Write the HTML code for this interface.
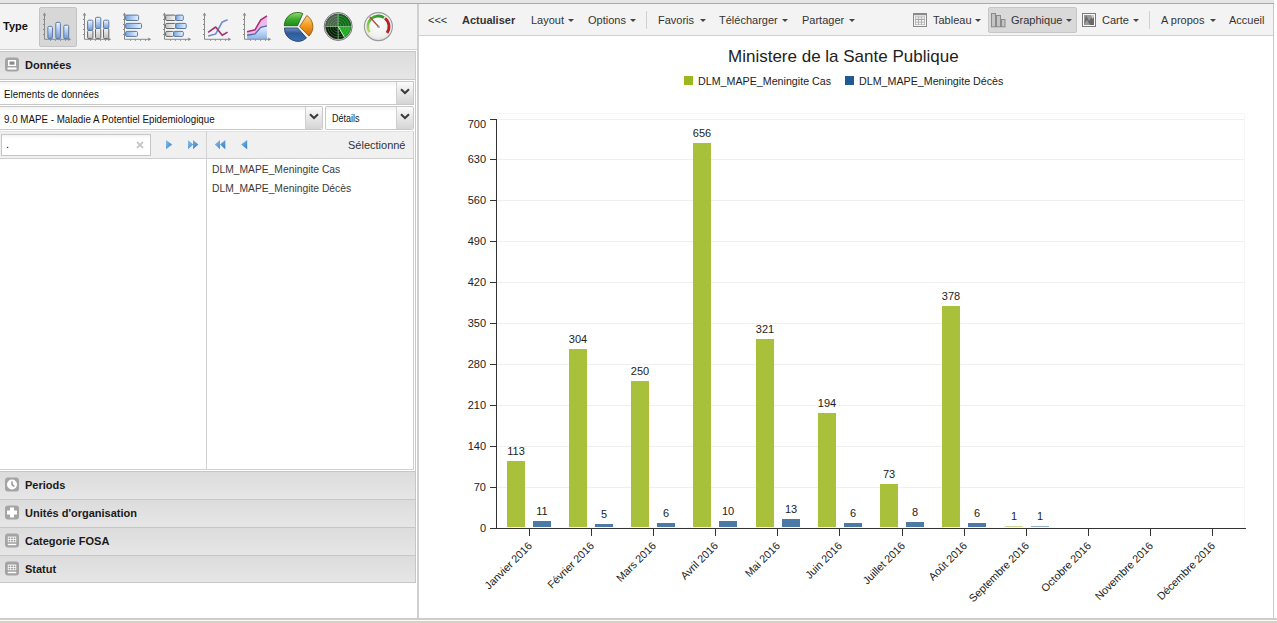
<!DOCTYPE html>
<html><head><meta charset="utf-8">
<style>
*{box-sizing:border-box}
html,body{margin:0;padding:0;width:1277px;height:623px;overflow:hidden;background:#fff;font-family:"Liberation Sans",sans-serif;color:#333}
.a{position:absolute}
.t{position:absolute;white-space:nowrap;line-height:1}
.hdr{position:absolute;left:0;width:416px;height:29px;background:linear-gradient(#dcdcdc,#e6e6e6);border:1px solid #c6c6c6;border-left:none}
.hdr .lbl{position:absolute;left:25px;top:7px;font-size:11px;font-weight:bold;color:#1a1a1a}
.hico{position:absolute;left:5px;top:5px}
.combo{position:absolute;background:linear-gradient(#f3f3f3,#fff 5px);border-top:1px solid #c8c8c8;border-bottom:1px solid #c8c8c8;border-right:1px solid #c8c8c8}
.trig{position:absolute;top:0;right:0;width:17px;height:100%;background:linear-gradient(#fbfbfb,#d4d4d4);border-left:1px solid #d0d0d0}
.tb{position:absolute;top:15px;line-height:1;white-space:nowrap;font-size:11px;color:#333}
.arr{position:absolute;top:19px;width:0;height:0;border-left:3px solid transparent;border-right:3px solid transparent;border-top:3px solid #444}
</style></head><body>
<!-- top strip -->
<div class="a" style="left:0;top:0;width:1274px;height:4px;background:#e6e6e6;border-bottom:1px solid #a9a9a9"></div>
<!-- bottom band -->
<div class="a" style="left:0;top:618px;width:1277px;height:2px;background:#cfcdc8"></div>
<div class="a" style="left:0;top:620px;width:1277px;height:1px;background:#fafaf7"></div>
<div class="a" style="left:0;top:621px;width:1277px;height:2px;background:#d4d1cb"></div>

<!-- LEFT PANEL -->
<div class="a" style="left:0;top:4px;width:417px;height:46px;background:#f3f3f3;border-bottom:1px solid #d0d0d0"></div>
<div class="t" style="left:3px;top:21px;font-size:11px;font-weight:bold;color:#111">Type</div>
<div class="a" style="left:39px;top:7px;width:38px;height:40px;background:#d7d7d7;border:1px solid #c3c3c3;border-radius:2px"></div>

<!--ICONS-START-->
<svg class="a" style="left:0;top:0" width="420" height="50">
<defs>
<linearGradient id="gb" x1="0" y1="0" x2="0" y2="1"><stop offset="0" stop-color="#f2f8ff"/><stop offset="1" stop-color="#6f9bd6"/></linearGradient>
<linearGradient id="gbh" x1="0" y1="0" x2="1" y2="0"><stop offset="0" stop-color="#7aa6de"/><stop offset="1" stop-color="#eaf4ff"/></linearGradient>
<linearGradient id="gg" x1="0" y1="0" x2="0" y2="1"><stop offset="0" stop-color="#f4f4f4"/><stop offset="1" stop-color="#bdbdbd"/></linearGradient>
<linearGradient id="ggh" x1="0" y1="0" x2="1" y2="0"><stop offset="0" stop-color="#c4c4c4"/><stop offset="1" stop-color="#f6f6f6"/></linearGradient>
<linearGradient id="pgreen" x1="0" y1="0" x2="0" y2="1"><stop offset="0" stop-color="#8fdc6a"/><stop offset="0.55" stop-color="#3aa82c"/><stop offset="1" stop-color="#1f8a1a"/></linearGradient>
<linearGradient id="porange" x1="0" y1="0" x2="0" y2="1"><stop offset="0" stop-color="#fbd38f"/><stop offset="0.5" stop-color="#f39a1c"/><stop offset="1" stop-color="#c86a0a"/></linearGradient>
<linearGradient id="pblue" x1="0" y1="0" x2="0" y2="1"><stop offset="0" stop-color="#6f8fc0"/><stop offset="0.4" stop-color="#2f5a9a"/><stop offset="1" stop-color="#3a70b0"/></linearGradient>
<radialGradient id="radar" cx="0.6" cy="0.45" r="0.6"><stop offset="0" stop-color="#2c7a2c"/><stop offset="0.7" stop-color="#123a14"/><stop offset="1" stop-color="#0a1f0b"/></radialGradient>
<radialGradient id="gauge" cx="0.5" cy="0.4" r="0.6"><stop offset="0" stop-color="#ffffff"/><stop offset="0.8" stop-color="#efefef"/><stop offset="1" stop-color="#d8d8d8"/></radialGradient>
<linearGradient id="areaB" x1="0" y1="0" x2="0" y2="1"><stop offset="0" stop-color="#e8f2ff"/><stop offset="1" stop-color="#8fb4e8"/></linearGradient>
<linearGradient id="ggreen" x1="0" y1="1" x2="0.6" y2="0"><stop offset="0" stop-color="#b8e070"/><stop offset="1" stop-color="#2f9a2a"/></linearGradient>
</defs>
<path d="M44.5 14.1 L44.5 39.3 L69.7 39.3" fill="none" stroke="#8a8a8a" stroke-width="1"/><path d="M42.7 15.6 L44.5 12.6 L46.3 15.6Z" fill="#8a8a8a"/><path d="M68.2 37.5 L71.2 39.3 L68.2 41.099999999999994Z" fill="#8a8a8a"/><line x1="43.0" y1="19.5" x2="44.5" y2="19.5" stroke="#8a8a8a"/><line x1="43.0" y1="24.5" x2="44.5" y2="24.5" stroke="#8a8a8a"/><line x1="43.0" y1="29.5" x2="44.5" y2="29.5" stroke="#8a8a8a"/><line x1="43.0" y1="34.5" x2="44.5" y2="34.5" stroke="#8a8a8a"/><line x1="50.5" y1="39.3" x2="50.5" y2="40.8" stroke="#8a8a8a"/><line x1="55.5" y1="39.3" x2="55.5" y2="40.8" stroke="#8a8a8a"/><line x1="60.5" y1="39.3" x2="60.5" y2="40.8" stroke="#8a8a8a"/><line x1="65.5" y1="39.3" x2="65.5" y2="40.8" stroke="#8a8a8a"/>
<rect x="47.9" y="26.3" width="4.5" height="12.3" rx="1.2" fill="url(#gb)" stroke="#5a79a8" stroke-width="1"/>
<rect x="55.8" y="22.3" width="4.600000000000001" height="16.3" rx="1.2" fill="url(#gb)" stroke="#5a79a8" stroke-width="1"/>
<rect x="63.8" y="25.2" width="4.900000000000006" height="13.400000000000002" rx="1.2" fill="url(#gb)" stroke="#5a79a8" stroke-width="1"/>
<path d="M84.5 14.1 L84.5 39.3 L109.7 39.3" fill="none" stroke="#8a8a8a" stroke-width="1"/><path d="M82.7 15.6 L84.5 12.6 L86.3 15.6Z" fill="#8a8a8a"/><path d="M108.2 37.5 L111.2 39.3 L108.2 41.099999999999994Z" fill="#8a8a8a"/><line x1="83.0" y1="19.5" x2="84.5" y2="19.5" stroke="#8a8a8a"/><line x1="83.0" y1="24.5" x2="84.5" y2="24.5" stroke="#8a8a8a"/><line x1="83.0" y1="29.5" x2="84.5" y2="29.5" stroke="#8a8a8a"/><line x1="83.0" y1="34.5" x2="84.5" y2="34.5" stroke="#8a8a8a"/><line x1="90.5" y1="39.3" x2="90.5" y2="40.8" stroke="#8a8a8a"/><line x1="95.5" y1="39.3" x2="95.5" y2="40.8" stroke="#8a8a8a"/><line x1="100.5" y1="39.3" x2="100.5" y2="40.8" stroke="#8a8a8a"/><line x1="105.5" y1="39.3" x2="105.5" y2="40.8" stroke="#8a8a8a"/>
<rect x="87.6" y="30.3" width="5.300000000000011" height="8.3" rx="1.2" fill="url(#gg)" stroke="#666" stroke-width="1"/>
<rect x="87.6" y="20.2" width="5.300000000000011" height="10.100000000000001" rx="1.2" fill="url(#gb)" stroke="#5a79a8" stroke-width="1"/>
<rect x="95.5" y="28.5" width="5.299999999999997" height="10.100000000000001" rx="1.2" fill="url(#gg)" stroke="#666" stroke-width="1"/>
<rect x="95.5" y="17.3" width="5.299999999999997" height="11.2" rx="1.2" fill="url(#gb)" stroke="#5a79a8" stroke-width="1"/>
<rect x="103.5" y="28.5" width="5.299999999999997" height="10.100000000000001" rx="1.2" fill="url(#gg)" stroke="#666" stroke-width="1"/>
<rect x="103.5" y="20.2" width="5.299999999999997" height="8.3" rx="1.2" fill="url(#gb)" stroke="#5a79a8" stroke-width="1"/>
<path d="M124.5 14.1 L124.5 39.3 L149.7 39.3" fill="none" stroke="#8a8a8a" stroke-width="1"/><path d="M122.7 15.6 L124.5 12.6 L126.3 15.6Z" fill="#8a8a8a"/><path d="M148.2 37.5 L151.2 39.3 L148.2 41.099999999999994Z" fill="#8a8a8a"/><line x1="123.0" y1="19.5" x2="124.5" y2="19.5" stroke="#8a8a8a"/><line x1="123.0" y1="24.5" x2="124.5" y2="24.5" stroke="#8a8a8a"/><line x1="123.0" y1="29.5" x2="124.5" y2="29.5" stroke="#8a8a8a"/><line x1="123.0" y1="34.5" x2="124.5" y2="34.5" stroke="#8a8a8a"/><line x1="130.5" y1="39.3" x2="130.5" y2="40.8" stroke="#8a8a8a"/><line x1="135.5" y1="39.3" x2="135.5" y2="40.8" stroke="#8a8a8a"/><line x1="140.5" y1="39.3" x2="140.5" y2="40.8" stroke="#8a8a8a"/><line x1="145.5" y1="39.3" x2="145.5" y2="40.8" stroke="#8a8a8a"/>
<rect x="125.6" y="15.1" width="13.0" height="5.4" rx="1.2" fill="url(#gbh)" stroke="#5a79a8" stroke-width="1"/>
<rect x="125.6" y="23.4" width="15.900000000000006" height="5.100000000000001" rx="1.2" fill="url(#gbh)" stroke="#5a79a8" stroke-width="1"/>
<rect x="125.6" y="31.4" width="11.900000000000006" height="5.0" rx="1.2" fill="url(#gbh)" stroke="#5a79a8" stroke-width="1"/>
<path d="M164.5 14.1 L164.5 39.3 L189.7 39.3" fill="none" stroke="#8a8a8a" stroke-width="1"/><path d="M162.7 15.6 L164.5 12.6 L166.3 15.6Z" fill="#8a8a8a"/><path d="M188.2 37.5 L191.2 39.3 L188.2 41.099999999999994Z" fill="#8a8a8a"/><line x1="163.0" y1="19.5" x2="164.5" y2="19.5" stroke="#8a8a8a"/><line x1="163.0" y1="24.5" x2="164.5" y2="24.5" stroke="#8a8a8a"/><line x1="163.0" y1="29.5" x2="164.5" y2="29.5" stroke="#8a8a8a"/><line x1="163.0" y1="34.5" x2="164.5" y2="34.5" stroke="#8a8a8a"/><line x1="170.5" y1="39.3" x2="170.5" y2="40.8" stroke="#8a8a8a"/><line x1="175.5" y1="39.3" x2="175.5" y2="40.8" stroke="#8a8a8a"/><line x1="180.5" y1="39.3" x2="180.5" y2="40.8" stroke="#8a8a8a"/><line x1="185.5" y1="39.3" x2="185.5" y2="40.8" stroke="#8a8a8a"/>
<rect x="165.6" y="15.1" width="10.200000000000017" height="5.4" rx="1.2" fill="url(#ggh)" stroke="#666" stroke-width="1"/>
<rect x="175.8" y="15.1" width="7.5" height="5.4" rx="1.2" fill="url(#gbh)" stroke="#5a79a8" stroke-width="1"/>
<rect x="165.6" y="23.4" width="10.200000000000017" height="5.100000000000001" rx="1.2" fill="url(#ggh)" stroke="#666" stroke-width="1"/>
<rect x="175.8" y="23.4" width="10.399999999999977" height="5.100000000000001" rx="1.2" fill="url(#gbh)" stroke="#5a79a8" stroke-width="1"/>
<rect x="165.6" y="31.4" width="8.0" height="5.0" rx="1.2" fill="url(#ggh)" stroke="#666" stroke-width="1"/>
<rect x="173.6" y="31.4" width="9.700000000000017" height="5.0" rx="1.2" fill="url(#gbh)" stroke="#5a79a8" stroke-width="1"/>
<path d="M204.5 14.1 L204.5 39.3 L229.7 39.3" fill="none" stroke="#8a8a8a" stroke-width="1"/><path d="M202.7 15.6 L204.5 12.6 L206.3 15.6Z" fill="#8a8a8a"/><path d="M228.2 37.5 L231.2 39.3 L228.2 41.099999999999994Z" fill="#8a8a8a"/><line x1="203.0" y1="19.5" x2="204.5" y2="19.5" stroke="#8a8a8a"/><line x1="203.0" y1="24.5" x2="204.5" y2="24.5" stroke="#8a8a8a"/><line x1="203.0" y1="29.5" x2="204.5" y2="29.5" stroke="#8a8a8a"/><line x1="203.0" y1="34.5" x2="204.5" y2="34.5" stroke="#8a8a8a"/><line x1="210.5" y1="39.3" x2="210.5" y2="40.8" stroke="#8a8a8a"/><line x1="215.5" y1="39.3" x2="215.5" y2="40.8" stroke="#8a8a8a"/><line x1="220.5" y1="39.3" x2="220.5" y2="40.8" stroke="#8a8a8a"/><line x1="225.5" y1="39.3" x2="225.5" y2="40.8" stroke="#8a8a8a"/>
<polyline points="208.1,35.9 215.7,33.9 222.2,22 227.6,19.8" fill="none" stroke="#6f8fcf" stroke-width="1.6" stroke-linejoin="round"/>
<polyline points="208.1,32.4 215.7,27 222.2,35.3 227.6,32.1" fill="none" stroke="#a0356e" stroke-width="1.6" stroke-linejoin="round"/>
<path d="M247.1 31.7 L255 29.9 L260.8 19.8 L267 15.8 L267 25.9 L260.8 27.4 L255 33.9 L247.1 35.3Z" fill="#f0b8e4"/>
<path d="M247.1 35.3 L255 33.9 L260.8 27.4 L267 25.9 L267 39 L247.1 39Z" fill="url(#areaB)"/>
<path d="M244.5 14.1 L244.5 39.3 L269.7 39.3" fill="none" stroke="#8a8a8a" stroke-width="1"/><path d="M242.7 15.6 L244.5 12.6 L246.3 15.6Z" fill="#8a8a8a"/><path d="M268.2 37.5 L271.2 39.3 L268.2 41.099999999999994Z" fill="#8a8a8a"/><line x1="243.0" y1="19.5" x2="244.5" y2="19.5" stroke="#8a8a8a"/><line x1="243.0" y1="24.5" x2="244.5" y2="24.5" stroke="#8a8a8a"/><line x1="243.0" y1="29.5" x2="244.5" y2="29.5" stroke="#8a8a8a"/><line x1="243.0" y1="34.5" x2="244.5" y2="34.5" stroke="#8a8a8a"/><line x1="250.5" y1="39.3" x2="250.5" y2="40.8" stroke="#8a8a8a"/><line x1="255.5" y1="39.3" x2="255.5" y2="40.8" stroke="#8a8a8a"/><line x1="260.5" y1="39.3" x2="260.5" y2="40.8" stroke="#8a8a8a"/><line x1="265.5" y1="39.3" x2="265.5" y2="40.8" stroke="#8a8a8a"/>
<polyline points="247.1,35.3 255,33.9 260.8,27.4 267,25.9" fill="none" stroke="#5566b0" stroke-width="1.4"/>
<polyline points="247.1,31.7 255,29.9 260.8,19.8 267,15.8" fill="none" stroke="#a8307a" stroke-width="1.6"/>
<path d="M297.58 25.72 L302.78 13.47 A13.3 13.3 0 0 0 284.28 25.72Z" fill="url(#pgreen)" stroke="#1d5714" stroke-width="0.8"/>
<path d="M299.59 26.66 L309.00 36.07 A13.3 13.3 0 0 0 306.84 15.51Z" fill="url(#porange)" stroke="#8f5208" stroke-width="0.8"/>
<path d="M297.76 27.98 L284.46 27.98 A13.3 13.3 0 0 0 306.49 38.02Z" fill="url(#pblue)" stroke="#15335f" stroke-width="0.8"/>
<circle cx="338.2" cy="26.5" r="14" fill="#d8dcd8" stroke="#6a6a6a" stroke-width="0.9"/>
<circle cx="338.2" cy="26.5" r="12.6" fill="#0c1a0c" stroke="#4a4a4a" stroke-width="0.6"/>
<path d="M338.2 26.5 L325.6 26.5 A12.6 12.6 0 0 1 338.2 13.9Z" fill="#4f5f4f"/>
<path d="M338.2 26.5 L338.2 13.9 A12.6 12.6 0 0 1 350.8 26.5Z" fill="#11661a"/>
<path d="M338.2 26.5 L350.8 26.5 A12.6 12.6 0 0 1 344.5 37.4Z" fill="#1fa820"/>
<circle cx="338.2" cy="26.5" r="3" fill="none" stroke="#6fe06f" stroke-width="0.6" opacity="0.55"/>
<circle cx="338.2" cy="26.5" r="5.5" fill="none" stroke="#6fe06f" stroke-width="0.6" opacity="0.55"/>
<circle cx="338.2" cy="26.5" r="8" fill="none" stroke="#6fe06f" stroke-width="0.6" opacity="0.55"/>
<circle cx="338.2" cy="26.5" r="10.5" fill="none" stroke="#6fe06f" stroke-width="0.6" opacity="0.55"/>
<line x1="325.6" y1="26.5" x2="350.8" y2="26.5" stroke="#9fcf9f" stroke-width="0.7"/>
<line x1="338.2" y1="13.9" x2="338.2" y2="39.1" stroke="#9fcf9f" stroke-width="0.7"/>
<line x1="338.2" y1="26.5" x2="344.5" y2="37.4" stroke="#b8ffb8" stroke-width="1"/>
<circle cx="378.4" cy="26.6" r="14" fill="url(#gauge)" stroke="#9a9a9a" stroke-width="1.1"/>
<path d="M369.41 32.22 A10.6 10.6 0 0 1 384.02 17.61" fill="none" stroke="url(#ggreen)" stroke-width="2.8"/>
<path d="M384.93 18.25 A10.6 10.6 0 0 1 386.98 32.83" fill="none" stroke="#b82222" stroke-width="2.8"/>
<line x1="378.6" y1="26.8" x2="369.8" y2="17" stroke="#b04a30" stroke-width="1.3"/>
<circle cx="378.6" cy="26.8" r="1.3" fill="#999"/>
</svg>
<!--ICONS-END-->
<!--LEFT-START-->
<div class="hdr" style="top:51px;height:29px"><svg class="hico" width="14" height="15"><rect x="0" y="0.5" width="14" height="14" rx="3" fill="#a4a4a4"/><rect x="3" y="3" width="8" height="6" fill="#fff"/><rect x="4.5" y="4.5" width="5" height="3.2" fill="#8a8a8a"/><rect x="2.5" y="10.5" width="9" height="2" fill="#fff"/></svg><div class="lbl">Données</div></div>
<div class="combo" style="left:0;top:81px;width:414px;height:24px"><div class="t" style="left:4px;top:7px;font-size:10.6px;color:#111;transform:scaleX(0.925);transform-origin:0 0">Elements de données</div><div class="trig"></div></div>
<svg class="a" style="left:400px;top:88px" width="10" height="7"><path d="M1 1.2 L5 5 L9 1.2" fill="none" stroke="#3a3a3a" stroke-width="2"/></svg>
<div class="combo" style="left:0;top:106px;width:323px;height:24px;border-radius:0 2px 2px 0"><div class="trig" style="width:17px;border-radius:0 2px 2px 0"></div></div>
<div class="t" style="left:4px;top:114px;font-size:10.6px;color:#111;transform:scaleX(0.922);transform-origin:0 0">9.0 MAPE - Maladie A Potentiel Epidemiologique</div>
<svg class="a" style="left:309px;top:113px" width="10" height="7"><path d="M1 1.2 L5 5 L9 1.2" fill="none" stroke="#3a3a3a" stroke-width="2"/></svg>
<div class="combo" style="left:325px;top:106px;width:89px;height:24px;border-left:1px solid #c8c8c8;border-radius:2px"><div class="trig" style="border-radius:0 2px 2px 0"></div></div>
<div class="t" style="left:332px;top:114px;font-size:10px;color:#111;transform:scaleX(0.9);transform-origin:0 0">Détails</div>
<svg class="a" style="left:400px;top:113px" width="10" height="7"><path d="M1 1.2 L5 5 L9 1.2" fill="none" stroke="#3a3a3a" stroke-width="2"/></svg>
<div class="a" style="left:0;top:131px;width:414px;height:28px;background:#f0f0f0;border-top:1px solid #e2e2e2;border-bottom:1px solid #d0d0d0;border-right:1px solid #d0d0d0"></div>
<div class="a" style="left:1px;top:134px;width:150px;height:22px;background:linear-gradient(#f4f4f4,#fff 4px);border:1px solid #c6c6c6"></div>
<div class="t" style="left:6px;top:139px;font-size:11px;color:#000">.</div>
<svg class="a" style="left:136px;top:141px" width="8" height="8"><path d="M1 1 L7 7 M7 1 L1 7" stroke="#c8c8c8" stroke-width="1.8"/></svg>
<svg class="a" style="left:0;top:0" width="260" height="160"><defs><linearGradient id="ba" x1="0" y1="0" x2="1" y2="1"><stop offset="0" stop-color="#8ec2ee"/><stop offset="1" stop-color="#2f7cc4"/></linearGradient></defs><path d="M166 140 L172.2 144.6 L166 149.2Z" fill="url(#ba)"/><path d="M188 140 L193.2 144.6 L188 149.2Z M193 140 L198.4 144.6 L193 149.2Z" fill="url(#ba)"/><path d="M220 140 L214.8 144.6 L220 149.2Z M225.3 140 L220 144.6 L225.3 149.2Z" fill="url(#ba)"/><path d="M247.2 140 L241 144.6 L247.2 149.2Z" fill="url(#ba)"/></svg>
<div class="t" style="left:348px;top:140px;font-size:11px;color:#333">Sélectionné</div>
<div class="a" style="left:0;top:159px;width:414px;height:311px;background:#fff;border-right:1px solid #d0d0d0;border-bottom:1px solid #d0d0d0"></div>
<div class="a" style="left:415px;top:51px;width:1px;height:532px;background:#cacaca"></div>
<div class="a" style="left:206px;top:131px;width:1px;height:338px;background:#d3d3d3"></div>
<div class="t" style="left:212px;top:165px;font-size:10.3px;color:#3a3a3a">DLM_MAPE_Meningite Cas</div>
<div class="t" style="left:212px;top:184px;font-size:10.3px;color:#3a3a3a">DLM_MAPE_Meningite Décès</div>
<div class="hdr" style="top:471px;height:29px"><svg class="hico" width="14" height="15"><rect x="0" y="0.5" width="14" height="14" rx="3" fill="#a4a4a4"/><circle cx="7" cy="7.5" r="5" fill="#fff"/><path d="M7 4.3 V7.6 L9.3 9.4" fill="none" stroke="#8a8a8a" stroke-width="1.3"/></svg><div class="lbl">Periods</div></div>
<div class="hdr" style="top:499px;height:29px"><svg class="hico" width="14" height="15"><rect x="0" y="0.5" width="14" height="14" rx="3" fill="#a4a4a4"/><path d="M5 2.5 H9 V5.5 H12 V9.5 H9 V12.5 H5 V9.5 H2 V5.5 H5Z" fill="#fff"/></svg><div class="lbl">Unités d'organisation</div></div>
<div class="hdr" style="top:527px;height:29px"><svg class="hico" width="14" height="15"><rect x="0" y="0.5" width="14" height="14" rx="3" fill="#a4a4a4"/><rect x="2.8" y="3.6" width="8.4" height="5.6" fill="#fff"/><path d="M3.6 4.4h1.7v1.7h-1.7z M6.15 4.4h1.7v1.7h-1.7z M8.7 4.4h1.7v1.7h-1.7z M3.6 6.8h1.7v1.7h-1.7z M6.15 6.8h1.7v1.7h-1.7z M8.7 6.8h1.7v1.7h-1.7z" fill="#9a9a9a"/><rect x="2.8" y="10.8" width="8.4" height="1.4" fill="#fff"/></svg><div class="lbl">Categorie FOSA</div></div>
<div class="hdr" style="top:555px;height:28px"><svg class="hico" width="14" height="15"><rect x="0" y="0.5" width="14" height="14" rx="3" fill="#a4a4a4"/><rect x="2.8" y="3.6" width="8.4" height="5.6" fill="#fff"/><path d="M3.6 4.4h1.7v1.7h-1.7z M6.15 4.4h1.7v1.7h-1.7z M8.7 4.4h1.7v1.7h-1.7z M3.6 6.8h1.7v1.7h-1.7z M6.15 6.8h1.7v1.7h-1.7z M8.7 6.8h1.7v1.7h-1.7z" fill="#9a9a9a"/><rect x="2.8" y="10.8" width="8.4" height="1.4" fill="#fff"/></svg><div class="lbl">Statut</div></div>
<!--LEFT-END-->
<!-- divider -->
<div class="a" style="left:417px;top:4px;width:2px;height:614px;background:#d0d0d0"></div>

<!-- RIGHT PANEL -->
<div class="a" style="left:419px;top:4px;width:855px;height:32px;background:#f3f3f3;border-bottom:1px solid #d0d0d0;border-right:1px solid #c8c8c8"></div>
<div class="a" style="left:1273px;top:36px;width:1px;height:582px;background:#c8c8c8"></div>
<div class="tb" style="left:428px">&lt;&lt;&lt;</div>
<div class="tb" style="left:462px;font-weight:bold">Actualiser</div>
<div class="tb" style="left:531px">Layout</div><div class="arr" style="left:568px"></div>
<div class="tb" style="left:588px">Options</div><div class="arr" style="left:630px"></div>
<div class="a" style="left:646px;top:11px;width:1px;height:18px;background:#d0d0d0"></div>
<div class="tb" style="left:658px">Favoris</div><div class="arr" style="left:700px"></div>
<div class="tb" style="left:719px">Télécharger</div><div class="arr" style="left:782px"></div>
<div class="tb" style="left:802px">Partager</div><div class="arr" style="left:849px"></div>

<div class="tb" style="left:933px">Tableau</div><div class="arr" style="left:975px"></div>
<div class="a" style="left:988px;top:7px;width:89px;height:26px;background:#d9d9d9;border:1px solid #c6c6c6;border-radius:2px"></div>
<svg class="a" style="left:900px;top:5px" width="210" height="30">
<rect x="13.5" y="8.5" width="13" height="13" fill="#f4f4f4" stroke="#8a8a8a"/>
<rect x="13" y="8" width="14" height="2.2" fill="#8a8a8a"/>
<rect x="15" y="11.5" width="10" height="8.5" fill="#a6a6a6"/>
<path d="M15.6 12.2h2.4v1.9h-2.4z M18.8 12.2h2.4v1.9h-2.4z M22 12.2h2.4v1.9h-2.4z M15.6 14.9h2.4v1.9h-2.4z M18.8 14.9h2.4v1.9h-2.4z M22 14.9h2.4v1.9h-2.4z M15.6 17.6h2.4v1.9h-2.4z M18.8 17.6h2.4v1.9h-2.4z M22 17.6h2.4v1.9h-2.4z" fill="#f2f2f2"/>
<rect x="91.5" y="8.5" width="4" height="13.3" fill="#c4c4c4" stroke="#8a8a8a"/>
<rect x="96.5" y="10.5" width="4" height="11.3" fill="#c4c4c4" stroke="#8a8a8a"/>
<rect x="101.5" y="14.5" width="3.5" height="7.3" fill="#c4c4c4" stroke="#8a8a8a"/>
<rect x="182.5" y="8.5" width="13" height="13" fill="#fafafa" stroke="#7a7a7a"/>
<path d="M184 10 H194 V20 H184Z" fill="#9a9a9a"/>
<path d="M186 10 L189 16 L192 11 L194 13 L194 20 L190 20 L187 15 L184 19Z" fill="#6a6a6a"/>
<path d="M191 10 L194 10 L194 12 L192 14Z" fill="#c8c8c8"/>
</svg>
<div class="tb" style="left:1011px">Graphique</div><div class="arr" style="left:1066px"></div>
<div class="tb" style="left:1102px">Carte</div><div class="arr" style="left:1133px"></div>
<div class="a" style="left:1149px;top:11px;width:1px;height:18px;background:#d0d0d0"></div>
<div class="tb" style="left:1161px">A propos</div><div class="arr" style="left:1210px"></div>
<div class="tb" style="left:1229px">Accueil</div>

<!-- CHART -->
<div class="t" style="left:728px;top:48px;font-size:17px;color:#222">Ministere de la Sante Publique</div>

<!--CHART-START-->
<svg class="a" style="left:0;top:0" width="1277" height="623" font-family="Liberation Sans, sans-serif">
<line x1="497" y1="487.5" x2="1245" y2="487.5" stroke="#efefef" stroke-width="1"/>
<line x1="497" y1="446.5" x2="1245" y2="446.5" stroke="#efefef" stroke-width="1"/>
<line x1="497" y1="405.5" x2="1245" y2="405.5" stroke="#efefef" stroke-width="1"/>
<line x1="497" y1="364.5" x2="1245" y2="364.5" stroke="#efefef" stroke-width="1"/>
<line x1="497" y1="323.5" x2="1245" y2="323.5" stroke="#efefef" stroke-width="1"/>
<line x1="497" y1="282.5" x2="1245" y2="282.5" stroke="#efefef" stroke-width="1"/>
<line x1="497" y1="241.5" x2="1245" y2="241.5" stroke="#efefef" stroke-width="1"/>
<line x1="497" y1="200.5" x2="1245" y2="200.5" stroke="#efefef" stroke-width="1"/>
<line x1="497" y1="159.5" x2="1245" y2="159.5" stroke="#efefef" stroke-width="1"/>
<line x1="497" y1="119.5" x2="1245" y2="119.5" stroke="#efefef" stroke-width="1"/>
<line x1="497" y1="113.5" x2="1245" y2="113.5" stroke="#f6f6f6"/>
<line x1="1244.5" y1="113" x2="1244.5" y2="528" stroke="#f6f6f6"/>
<rect x="507" y="461.00" width="18" height="66.00" fill="#a8c03a"/>
<rect x="533" y="521.00" width="18" height="6.00" fill="#4a7aa5"/>
<text x="516.00" y="454.80" font-size="11" fill="#222" text-anchor="middle">113</text>
<text x="542.00" y="514.80" font-size="11" fill="#222" text-anchor="middle">11</text>
<rect x="569" y="349.00" width="18" height="178.00" fill="#a8c03a"/>
<rect x="595" y="524.00" width="18" height="3.00" fill="#4a7aa5"/>
<text x="578.00" y="342.80" font-size="11" fill="#222" text-anchor="middle">304</text>
<text x="604.00" y="517.80" font-size="11" fill="#222" text-anchor="middle">5</text>
<rect x="631" y="381.00" width="18" height="146.00" fill="#a8c03a"/>
<rect x="657" y="523.00" width="18" height="4.00" fill="#4a7aa5"/>
<text x="640.00" y="374.80" font-size="11" fill="#222" text-anchor="middle">250</text>
<text x="666.00" y="516.80" font-size="11" fill="#222" text-anchor="middle">6</text>
<rect x="693" y="143.00" width="18" height="384.00" fill="#a8c03a"/>
<rect x="719" y="521.00" width="18" height="6.00" fill="#4a7aa5"/>
<text x="702.00" y="136.80" font-size="11" fill="#222" text-anchor="middle">656</text>
<text x="728.00" y="514.80" font-size="11" fill="#222" text-anchor="middle">10</text>
<rect x="756" y="339.00" width="18" height="188.00" fill="#a8c03a"/>
<rect x="782" y="519.00" width="18" height="8.00" fill="#4a7aa5"/>
<text x="765.00" y="332.80" font-size="11" fill="#222" text-anchor="middle">321</text>
<text x="791.00" y="512.80" font-size="11" fill="#222" text-anchor="middle">13</text>
<rect x="818" y="413.00" width="18" height="114.00" fill="#a8c03a"/>
<rect x="844" y="523.00" width="18" height="4.00" fill="#4a7aa5"/>
<text x="827.00" y="406.80" font-size="11" fill="#222" text-anchor="middle">194</text>
<text x="853.00" y="516.80" font-size="11" fill="#222" text-anchor="middle">6</text>
<rect x="880" y="484.00" width="18" height="43.00" fill="#a8c03a"/>
<rect x="906" y="522.00" width="18" height="5.00" fill="#4a7aa5"/>
<text x="889.00" y="477.80" font-size="11" fill="#222" text-anchor="middle">73</text>
<text x="915.00" y="515.80" font-size="11" fill="#222" text-anchor="middle">8</text>
<rect x="942" y="306.00" width="18" height="221.00" fill="#a8c03a"/>
<rect x="968" y="523.00" width="18" height="4.00" fill="#4a7aa5"/>
<text x="951.00" y="299.80" font-size="11" fill="#222" text-anchor="middle">378</text>
<text x="977.00" y="516.80" font-size="11" fill="#222" text-anchor="middle">6</text>
<rect x="1005" y="526.41" width="18" height="0.59" fill="#a8c03a"/>
<rect x="1031" y="526.41" width="18" height="0.59" fill="#4a7aa5"/>
<text x="1014.00" y="520.21" font-size="11" fill="#222" text-anchor="middle">1</text>
<text x="1040.00" y="520.21" font-size="11" fill="#222" text-anchor="middle">1</text>
<line x1="496.5" y1="119.5" x2="496.5" y2="529" stroke="#333" stroke-width="1"/>
<line x1="490" y1="528.5" x2="1246" y2="528.5" stroke="#333" stroke-width="1"/>
<line x1="490" y1="528.5" x2="497" y2="528.5" stroke="#333"/>
<text x="486" y="531.5" font-size="11" fill="#222" text-anchor="end">0</text>
<line x1="490" y1="487.5" x2="497" y2="487.5" stroke="#333"/>
<text x="486" y="490.5" font-size="11" fill="#222" text-anchor="end">70</text>
<line x1="490" y1="446.5" x2="497" y2="446.5" stroke="#333"/>
<text x="486" y="449.5" font-size="11" fill="#222" text-anchor="end">140</text>
<line x1="490" y1="405.5" x2="497" y2="405.5" stroke="#333"/>
<text x="486" y="408.5" font-size="11" fill="#222" text-anchor="end">210</text>
<line x1="490" y1="364.5" x2="497" y2="364.5" stroke="#333"/>
<text x="486" y="367.5" font-size="11" fill="#222" text-anchor="end">280</text>
<line x1="490" y1="323.5" x2="497" y2="323.5" stroke="#333"/>
<text x="486" y="326.5" font-size="11" fill="#222" text-anchor="end">350</text>
<line x1="490" y1="282.5" x2="497" y2="282.5" stroke="#333"/>
<text x="486" y="285.5" font-size="11" fill="#222" text-anchor="end">420</text>
<line x1="490" y1="241.5" x2="497" y2="241.5" stroke="#333"/>
<text x="486" y="244.5" font-size="11" fill="#222" text-anchor="end">490</text>
<line x1="490" y1="200.5" x2="497" y2="200.5" stroke="#333"/>
<text x="486" y="203.5" font-size="11" fill="#222" text-anchor="end">560</text>
<line x1="490" y1="159.5" x2="497" y2="159.5" stroke="#333"/>
<text x="486" y="162.5" font-size="11" fill="#222" text-anchor="end">630</text>
<line x1="490" y1="119.5" x2="497" y2="119.5" stroke="#333"/>
<text x="486" y="128" font-size="11" fill="#222" text-anchor="end">700</text>
<line x1="529.5" y1="528" x2="529.5" y2="536" stroke="#333"/>
<text x="532.8" y="546.4" font-size="10.8" fill="#222" text-anchor="end" transform="rotate(-45 532.8 546.4)">Janvier 2016</text>
<line x1="591.5" y1="528" x2="591.5" y2="536" stroke="#333"/>
<text x="594.8" y="546.4" font-size="10.8" fill="#222" text-anchor="end" transform="rotate(-45 594.8 546.4)">Février 2016</text>
<line x1="653.5" y1="528" x2="653.5" y2="536" stroke="#333"/>
<text x="656.8" y="546.4" font-size="10.8" fill="#222" text-anchor="end" transform="rotate(-45 656.8 546.4)">Mars 2016</text>
<line x1="715.5" y1="528" x2="715.5" y2="536" stroke="#333"/>
<text x="718.8" y="546.4" font-size="10.8" fill="#222" text-anchor="end" transform="rotate(-45 718.8 546.4)">Avril 2016</text>
<line x1="777.5" y1="528" x2="777.5" y2="536" stroke="#333"/>
<text x="780.8" y="546.4" font-size="10.8" fill="#222" text-anchor="end" transform="rotate(-45 780.8 546.4)">Mai 2016</text>
<line x1="839.5" y1="528" x2="839.5" y2="536" stroke="#333"/>
<text x="842.8" y="546.4" font-size="10.8" fill="#222" text-anchor="end" transform="rotate(-45 842.8 546.4)">Juin 2016</text>
<line x1="902.5" y1="528" x2="902.5" y2="536" stroke="#333"/>
<text x="905.8" y="546.4" font-size="10.8" fill="#222" text-anchor="end" transform="rotate(-45 905.8 546.4)">Juillet 2016</text>
<line x1="964.5" y1="528" x2="964.5" y2="536" stroke="#333"/>
<text x="967.8" y="546.4" font-size="10.8" fill="#222" text-anchor="end" transform="rotate(-45 967.8 546.4)">Août 2016</text>
<line x1="1026.5" y1="528" x2="1026.5" y2="536" stroke="#333"/>
<text x="1029.8" y="546.4" font-size="10.8" fill="#222" text-anchor="end" transform="rotate(-45 1029.8 546.4)">Septembre 2016</text>
<line x1="1088.5" y1="528" x2="1088.5" y2="536" stroke="#333"/>
<text x="1091.8" y="546.4" font-size="10.8" fill="#222" text-anchor="end" transform="rotate(-45 1091.8 546.4)">Octobre 2016</text>
<line x1="1150.5" y1="528" x2="1150.5" y2="536" stroke="#333"/>
<text x="1153.8" y="546.4" font-size="10.8" fill="#222" text-anchor="end" transform="rotate(-45 1153.8 546.4)">Novembre 2016</text>
<line x1="1212.5" y1="528" x2="1212.5" y2="536" stroke="#333"/>
<text x="1215.8" y="546.4" font-size="10.8" fill="#222" text-anchor="end" transform="rotate(-45 1215.8 546.4)">Décembre 2016</text>
<rect x="684" y="76" width="9" height="9" fill="#9ab81f"/>
<text x="698" y="85" font-size="10.7" fill="#222">DLM_MAPE_Meningite Cas</text>
<rect x="845" y="76" width="9" height="9" fill="#1f5b93"/>
<text x="859" y="85" font-size="10.7" fill="#222">DLM_MAPE_Meningite Décès</text>
</svg>
<!--CHART-END-->
</body></html>
